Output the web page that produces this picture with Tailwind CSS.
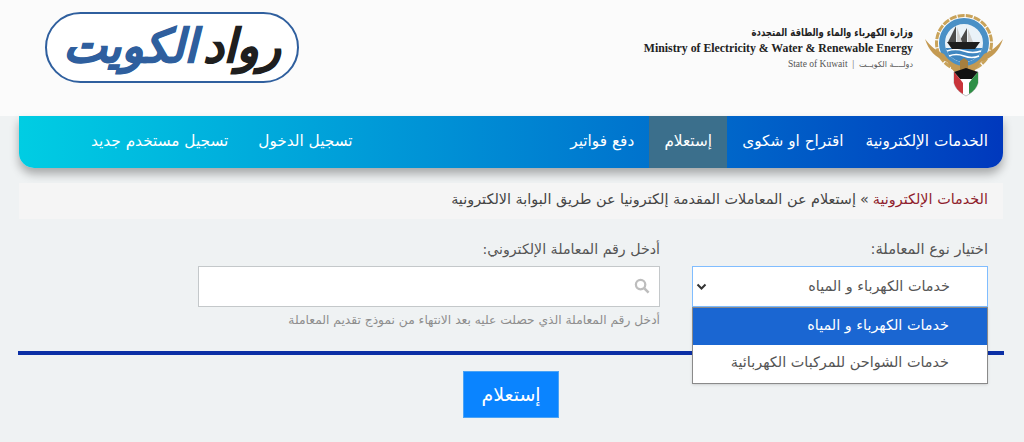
<!DOCTYPE html>
<html lang="ar" dir="rtl">
<head>
    <meta charset="UTF-8">
    <title>إستعلام</title>
    <script src="https://cdn.jsdelivr.net/npm/@tailwindcss/browser@4"></script>
</head>
<body class="bg-[#eff2f3] h-[442px] overflow-hidden font-['DejaVu_Sans',sans-serif] text-[#555]">

    <!-- Header -->
    <header class="h-[116px] bg-[#fbfbfb] flex items-start justify-between pr-[21px] pl-[45px]">
        <div class="flex items-start">
            <!-- Kuwait emblem -->
            <svg class="mt-[13px] w-[78px] h-[84px]" viewBox="0 0 78 84">
                <circle cx="39" cy="30" r="27.5" fill="none" stroke="#c9a35a" stroke-width="3" stroke-dasharray="7 1.2"/>
                <circle cx="39" cy="30" r="22" fill="#eaf2f8" stroke="#4a90c6" stroke-width="6"/>
                <path d="M20.7 35 A19 19 0 0 0 57.3 35Z" fill="#3f86c0"/>
                <path d="M22 38 Q30 35 39 38 T56 38 M24 43 Q31 40 39 43 T54 43" fill="none" stroke="#fff" stroke-width="1.6"/>
                <path d="M22 29 L55 29 L50 36 L27 36Z" fill="#1e1e1e"/>
                <path d="M31 13 L31 29 L23 29Z M42 15 L42 29 L34 29Z" fill="#4a4a4a"/>
                <path d="M32 14 L37 29 L32 29Z M43 16 L48 29 L43 29Z" fill="#cfcfcf"/>
                <path d="M0 26 C4 38 10 44 22 49 L30 60 L48 60 L56 49 C68 44 74 38 78 26 C72 34 66 38 59 41 C54 49 46 53 39 53 C32 53 24 49 19 41 C12 38 6 34 0 26Z" fill="#c49a52"/>
                <path d="M35 48 L39 45 L43 48 L43 58 L35 58Z" fill="#a67f3e"/>
                <path d="M29 59 L53 59 L53 70 Q51 78 41 83 Q31 78 29 70Z" fill="#fff" stroke="#aaa" stroke-width=".7"/>
                <path d="M29 59 L41 55 L53 59 L47 66 L35 66Z" fill="#111"/>
                <path d="M47 66 L53 59 L53 70 Q51 77 44 81 L44 70Z" fill="#2f8f46"/>
                <path d="M35 66 L29 59 L29 70 Q31 77 38 81 L38 70Z" fill="#c8343a"/>
            </svg>
            <div class="mt-[24px] mr-[12px] w-[270px]">
                <p class="text-[8.5px] leading-[16px] font-bold text-[#222] origin-right scale-y-[1.3]">وزارة الكهرباء والماء والطاقة المتجددة</p>
                <p class="text-[11.8px] leading-[17px] font-bold text-[#222] font-['Liberation_Serif',serif] whitespace-nowrap text-right" dir="ltr">Ministry of Electricity &amp; Water &amp; Renewable Energy</p>
                <p class="text-[9.5px] leading-[15px] text-[#555] font-['Liberation_Serif',serif] whitespace-nowrap text-right" dir="ltr">State of Kuwait &nbsp;|&nbsp; <span class="font-['DejaVu_Sans',sans-serif] text-[8px]">دولــــة الكويــت</span></p>
            </div>
        </div>
        <!-- Site logo -->
        <div class="mt-[12px] w-[254px] h-[71px] rounded-[36px] border-[2px] border-[#2f5f9e] bg-white flex items-center justify-center whitespace-nowrap italic font-bold text-[46px] leading-none pb-[3px]">
            <span class="text-[#1f1f1f] [-webkit-text-stroke:1px_#1f1f1f]">رواد</span><span class="text-[#2f5f9e] mr-[6px] [-webkit-text-stroke:1px_#2f5f9e]">الكويت</span>
        </div>
    </header>

    <!-- Main nav -->
    <nav class="ml-[19px] mr-[21px] h-[52px] rounded-b-[15px] bg-gradient-to-l from-[#0038bd] to-[#00cde3] shadow-[0_6px_10px_rgba(0,0,0,0.3)] flex text-white text-[15.3px]">
        <a class="h-full flex items-center pr-[15px] pl-[11px] pb-[1px]">الخدمات الإلكترونية</a>
        <a class="h-full flex items-center pr-[11px] pl-[15px] pb-[1px]">اقتراح او شكوى</a>
        <a class="h-full flex items-center bg-[#3b6f8c] w-[78px] justify-center pb-[1px]">إستعلام</a>
        <a class="h-full flex items-center px-[15px] pb-[1px]">دفع فواتير</a>
        <div class="mr-auto flex h-full">
            <a class="h-full flex items-center px-[16px] pb-[1px]">تسجيل الدخول</a>
            <a class="h-full flex items-center pr-[14px] pl-[72px] pb-[1px]">تسجيل مستخدم جديد</a>
        </div>
    </nav>

    <!-- Breadcrumb -->
    <div class="ml-[19px] mr-[21px] mt-[15px] h-[36px] bg-[#f5f5f5] flex items-center px-[15px] text-[14.4px] text-[#444] pb-[2px]">
        <span class="text-[#8f1d2c]">الخدمات الإلكترونية</span><span class="mx-1">»</span><span>إستعلام عن المعاملات المقدمة إلكترونيا عن طريق البوابة الالكترونية</span>
    </div>

    <!-- Form -->
    <div class="ml-[19px] mr-[21px] mt-[19px] flex items-start pr-[15px]">
        <div class="w-[296px] relative">
            <label class="block text-[14.7px] leading-[20px] pt-px text-[#555] h-[28px]">اختيار نوع المعاملة:</label>
            <div class="h-[41px] bg-white border border-[#80bdff] flex items-center justify-between pr-[37px] pl-[3px] text-[14.4px]">
                <span class="pt-px">خدمات الكهرباء و المياه</span>
                <svg class="w-[11px] h-[8px]" viewBox="0 0 11 8"><path d="M1.5 1.5 L5.5 5.5 L9.5 1.5" fill="none" stroke="#333" stroke-width="2"/></svg>
            </div>
            <!-- Open dropdown list -->
            <div class="absolute top-[69px] left-0 right-0 bg-white border border-[#8a8a8a] shadow-sm text-[14.4px] z-10">
                <div class="h-[37px] bg-[#1a66d2] text-white flex items-center pr-[38px] pb-[2px]">خدمات الكهرباء و المياه</div>
                <div class="h-[38px] text-[#555] flex items-center pr-[38px] pb-[2px]">خدمات الشواحن للمركبات الكهربائية</div>
            </div>
        </div>
        <div class="w-[462px] mr-[32px]">
            <label class="block text-[14.2px] leading-[20px] pt-px text-[#555] h-[28px]">أدخل رقم المعاملة الإلكتروني:</label>
            <div class="h-[41px] bg-white border border-[#c4c8ca] flex items-center pr-[9px]">
                <svg class="w-[16px] h-[16px] mb-[2px]" viewBox="0 0 17 17"><circle cx="7" cy="7" r="5" fill="none" stroke="#bdbdbd" stroke-width="2.4"/><path d="M11 11 L15.5 15.5" stroke="#bdbdbd" stroke-width="2.8"/></svg>
            </div>
            <p class="mt-[5px] text-[12.25px] leading-[16px] text-[#8d8d8d] whitespace-nowrap">أدخل رقم المعاملة الذي حصلت عليه بعد الانتهاء من نموذج تقديم المعاملة</p>
        </div>
    </div>

    <div class="ml-[18px] mr-[20px] mt-[23px] h-[4px] bg-[#0b2fa5]"></div>

    <div class="mt-[16px] flex justify-center pr-[2px]">
        <button class="w-[96px] h-[47px] bg-[#0a84ff] text-white text-[19px] border border-[#4ba3f5]">إستعلام</button>
    </div>
</body>
</html>
